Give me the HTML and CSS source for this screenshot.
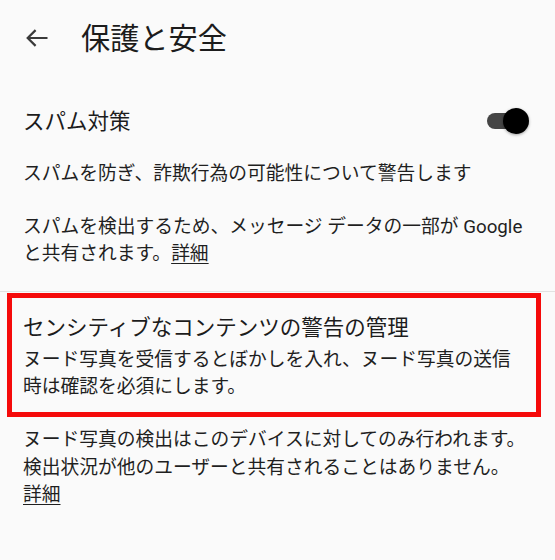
FILE: index.html
```html
<!DOCTYPE html>
<html lang="ja">
<head>
<meta charset="utf-8">
<title>保護と安全</title>
<link rel="stylesheet" href="styles.css">
</head>
<body>
<header class="appbar">
  <svg class="back" width="22" height="18" viewBox="0 0 22 18" aria-hidden="true">
    <path d="M21.5 9H1.8M9.6 1.1L1.7 9l7.9 7.9" fill="none" stroke="#3a3a3a" stroke-width="2.2" stroke-linecap="butt" stroke-linejoin="miter"/>
  </svg>
  <h1 class="appbar-title">保護と安全</h1>
</header>

<section class="setting-row">
  <span class="setting-title">スパム対策</span>
  <span class="switch" role="switch" aria-checked="true">
    <span class="switch-track"></span>
    <span class="switch-thumb"></span>
  </span>
</section>

<p class="text first">スパムを防ぎ、詐欺行為の可能性について警告します</p>
<p class="text second">スパムを検出するため、メッセージ データの一部が Google<br>と共有されます。<a class="link" href="#">詳細</a></p>

<div class="divider"></div>

<section class="highlight">
  <div class="hl-title">センシティブなコンテンツの警告の管理</div>
  <div class="hl-desc">ヌード写真を受信するとぼかしを入れ、ヌード写真の送信<br>時は確認を必須にします。</div>
</section>

<p class="text footer">ヌード写真の検出はこのデバイスに対してのみ行われます。<br>検出状況が他のユーザーと共有されることはありません。<br><a class="link" href="#">詳細</a></p>
</body>
</html>
```

FILE: styles.css
```css
html, body {
  margin: 0;
  padding: 0;
}
body {
  width: 555px;
  height: 560px;
  overflow: hidden;
  background: #fafafa;
  color: #1f1f1f;
  font-family: Roboto, "Noto Sans CJK JP", sans-serif;
}

.appbar {
  height: 78px;
  display: flex;
  align-items: center;
  padding-left: 26px;
}
.back {
  display: block;
  margin-top: -2px;
  flex: none;
}
.appbar-title {
  margin: 0 0 0 33px;
  font-size: 29.2px;
  font-weight: 400;
  line-height: 36px;
  color: #1c1c1c;
}

.setting-row {
  margin-top: 22px;
  height: 44px;
  display: flex;
  align-items: center;
  justify-content: space-between;
  padding: 0 26px 0 23px;
}
.setting-title {
  font-size: 21.5px;
  line-height: 30px;
  color: #1c1c1c;
}
.switch {
  position: relative;
  width: 42px;
  height: 26px;
  margin-top: -2px;
  display: block;
}
.switch-track {
  position: absolute;
  left: 0;
  top: 5px;
  width: 36px;
  height: 16px;
  border-radius: 8px;
  background: #454545;
}
.switch-thumb {
  position: absolute;
  right: 0;
  top: 0;
  width: 26px;
  height: 26px;
  border-radius: 50%;
  background: #000;
  box-shadow: 0 1px 3px rgba(0,0,0,0.35);
}

.text {
  margin: 0;
  padding: 0 23px;
  font-size: 18.75px;
  line-height: 27.5px;
  color: #1f1f1f;
}
.text.first { margin-top: 17px; }
.text.second { margin-top: 25px; }
.text.footer { margin-top: 10px; }

.link {
  color: inherit;
  text-decoration: underline;
  text-decoration-thickness: 1px;
  text-underline-offset: 3px;
}

.divider {
  margin-top: 22.5px;
  height: 1px;
  background: #e2e2e2;
}

.highlight {
  margin: 1px 14px 0 7px;
  border: 5px solid #f50a0a;
  padding: 15px 0 10.25px 11px;
}
.hl-title {
  font-size: 21.5px;
  line-height: 30px;
  color: #1c1c1c;
}
.hl-desc {
  margin-top: 3.75px;
  font-size: 18.75px;
  line-height: 27.5px;
  color: #1f1f1f;
  white-space: nowrap;
}
```
